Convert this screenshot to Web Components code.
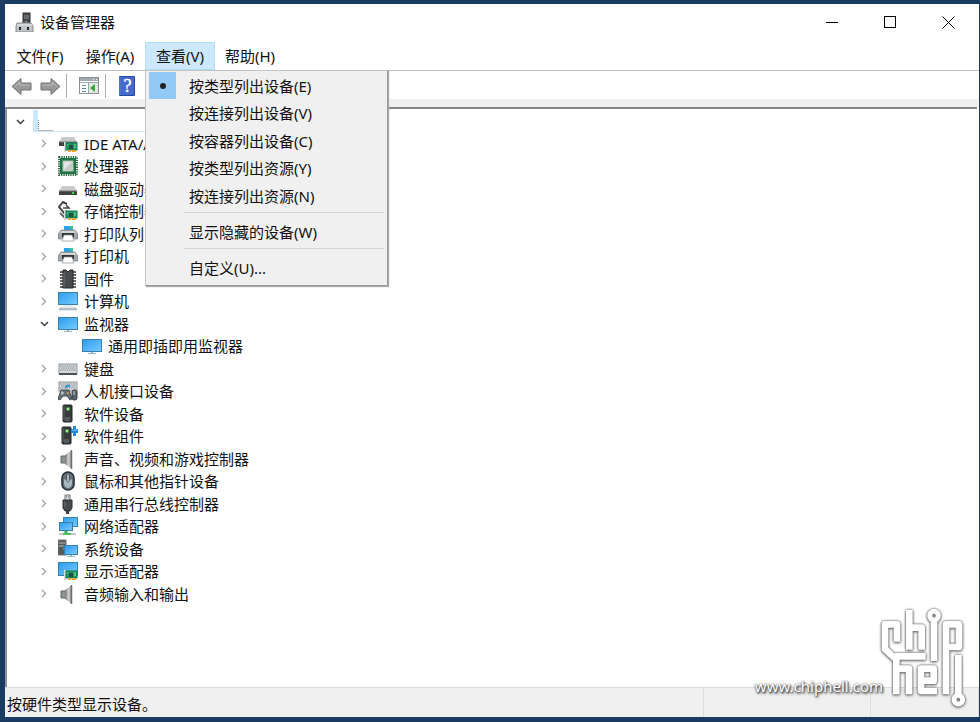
<!DOCTYPE html>
<html lang="zh-CN">
<head>
<meta charset="utf-8">
<title>设备管理器</title>
<style>
  body {
    margin: 0;
    background: #1a3c63;
    color: #111;
    font: 15px/22px "Noto Sans", "Noto Sans CJK SC", sans-serif;
  }
</style>
</head>
<body>
<dm-window caption="设备管理器">
  <dm-menu-bar slot="menu"></dm-menu-bar>
  <dm-toolbar slot="toolbar"></dm-toolbar>
  <dm-tree></dm-tree>
  <dm-status slot="status">按硬件类型显示设备。</dm-status>
</dm-window>
<chip-watermark></chip-watermark>

<script>
/**
 * Device manager window
 * Icons are 20x20 drawings, shared pieces (screen, card) are kept apart
 */

const DEFS = `
  <linearGradient id="scr" x1="0" y1="0" x2="1" y2="1">
    <stop offset="0" stop-color="#2f9cec"/><stop offset="1" stop-color="#74cbff"/>
  </linearGradient>
  <linearGradient id="met" x1="0" y1="0" x2="0" y2="1">
    <stop offset="0" stop-color="#d9d9d9"/><stop offset="1" stop-color="#8b8b8b"/>
  </linearGradient>
  <linearGradient id="horn" x1="0" y1="0" x2="1" y2="0">
    <stop offset="0" stop-color="#777"/><stop offset=".5" stop-color="#d0d0d0"/><stop offset="1" stop-color="#888"/>
  </linearGradient>`;

const screen = (x, y, w, h) => `
  <rect x="${x}" y="${y}" width="${w}" height="${h}" fill="#3c7eae"/>
  <rect x="${x + 1}" y="${y + 1}" width="${w - 2}" height="${h - 2}" fill="url(#scr)"/>`;

const card = (x, y) => `
  <path d="M${x} ${y}v10" stroke="#d6dde0" stroke-width="2"/>
  <rect x="${x + 1}" y="${y + 1}" width="11" height="7" fill="#1c9a63" stroke="#137a4d"/>
  <rect x="${x + 4}" y="${y + 3}" width="4" height="4" fill="#234f3f"/>
  <path d="M${x + 2} ${y + 3}h1M${x + 9} ${y + 3}h2M${x + 9} ${y + 5}h2" stroke="#8bdcb0"/>
  <path d="M${x + 3} ${y + 9}h3M${x + 7} ${y + 9}h4" stroke="#eba52f" stroke-width="2"/>`;

const drive = (y) => `
  <path d="M4 ${y}h12l3 5H1z" fill="#c9c9c9"/>
  <rect x="1" y="${y + 5}" width="18" height="4" fill="#3f4244"/>
  <path d="M1 ${y + 5}h18" stroke="#777"/>`;

const tower = (x) => `
  <rect x="${x}" y="1" width="9" height="17" rx="1" fill="#373b3c" stroke="#232728"/>
  <path d="M${x + 2} 14h5M${x + 2} 16h5" stroke="#737a7c"/>
  <path d="M${x + 1} 2v14" stroke="#5d6364"/>
  <circle cx="${x + 5}" cy="5" r="2" fill="#46ac42"/><circle cx="${x + 5}" cy="5" r="1" fill="#baffad"/>`;

const keys = (y, h) => `
  <rect x="1" y="${y}" width="18" height="${h}" fill="#d5d8da" stroke="#92979b"/>
  <path d="M2 ${y + 2}h16M3 ${y + 4}h14M2 ${y + 6}h16" stroke="#7e868b" stroke-dasharray="1.3 .9"/>`;

const speaker = `
  <path d="M3 7h5v7H3z" fill="#8d9294" stroke="#62676a"/>
  <path d="M7 6l7-5v19l-7-5z" fill="url(#horn)"/>
  <path d="M13.500 1v19" stroke="#6a6e70" stroke-width="1.500"/>`;

const printer = `
  <rect x="6" y="2" width="9" height="5" fill="#2aa2ea"/>
  <path d="M10 2h5v5z" fill="#34c793"/>
  <path d="M3 6h14l3 4v5H0v-5z" fill="#a3a6a8" stroke="#7b7f81" stroke-width=".6"/>
  <path d="M3 7h14l1 2H2z" fill="#d3d6d7"/>
  <rect x="4" y="9" width="12" height="4" fill="#2f3436"/>
  <path d="M6 11h8l2 6H4z" fill="#fff" stroke="#8b8f91" stroke-width=".7"/>`;

const ICONS = {
  app: `
    <rect x="9" y="1" width="7" height="11" fill="#44484b" stroke="#2f3233"/>
    <path d="M10 4h5M10 6h5" stroke="#888e92"/>
    <path d="M12 9v4" stroke="#bbb"/>
    <path d="M3 11h14l2 3v6H2v-6z" fill="#bfc4c7" stroke="#888d91"/>
    <path d="M3 13h15" stroke="#eee"/>
    <path d="M6 15v3M14 15v3" stroke="#24292b" stroke-width="2"/>`,
  ide: drive(3) + card(7, 8),
  cpu: `
    <rect x="1" y="1" width="18" height="18" fill="none" stroke="#316a45" stroke-width="2" stroke-dasharray="1.3 1"/>
    <rect x="2" y="2" width="16" height="16" fill="#1f7446"/>
    <rect x="5" y="5" width="10" height="10" fill="#e2e5e3" stroke="#a7c1af"/>
    <path d="M6 14l8-8v8z" fill="#c4cac6"/>`,
  disk: drive(7) + '<path d="M14 14h2" stroke="#45d14c" stroke-width="2"/>',
  storage: `
    <path d="M9 3L5 1 1 6l5 6 3-2" fill="none" stroke="#454545" stroke-width="2"/>
    <path d="M5 7h6L8 4" fill="none" stroke="#454545" stroke-width="1.500"/>
    <path d="M2 12l4 4h3" fill="none" stroke="#666" stroke-width="2"/>` + card(7, 9),
  printer,
  firmware: `
    <path d="M2 3h3M2 6h3M2 9h3M2 12h3M2 15h3M2 18h3M15 3h3M15 6h3M15 9h3M15 12h3M15 15h3M15 18h3" stroke="#34393b" stroke-width="1.600"/>
    <path d="M5 1h3l2 2 2-2h3v18H5z" fill="#484c4e" stroke="#252829"/>
    <path d="M6 4v14" stroke="#777"/>`,
  computer: screen(0, 1, 20, 13) + `
    <path d="M6 15h8" stroke="#bde7f9"/>
    <path d="M2 17h16l1 2H1z" fill="#c7cdd1" stroke="#8b969d" stroke-width=".5"/>`,
  monitor: screen(0, 3, 20, 13) + '<path d="M9 16h2v1h3v1H6v-1h3z" fill="#91b9cc"/>',
  keyboard: keys(5, 10) + '<path d="M1 15h18" stroke="#4d5254" stroke-width="2"/>',
  hid: keys(1, 9) + `
    <path d="M3 9h8l3 9-2 1-3-4H5l-3 4-2-1z" fill="#687176" stroke="#454d51"/>
    <path d="M3 12h3M4 10v4" stroke="#c9dce6"/>
    <circle cx="10" cy="12" r="1" fill="#e99d3d"/>
    <path d="M8 7q0-3 4-2" fill="none" stroke="#2793d8" stroke-width="2"/>
    <rect x="14" y="9" width="5" height="10" rx="2" fill="#59636a" stroke="#353e43"/>
    <path d="M16 10v4" stroke="#bdd8e7"/>`,
  device: tower(5),
  component: tower(4) + `
    <path d="M13 3h2V0h3v3h2v4h-2v3h-3V7h-2z" fill="#2588da"/>
    <path d="M14 4h5" stroke="#70bdf2"/>`,
  speaker,
  mouse: `
    <rect x="4" y="1" width="12" height="18" rx="6" fill="#65717a" stroke="#282f33" stroke-width="1.6"/>
    <path d="M6 8q4 3 8 0v5q-1 4-4 4t-4-4z" fill="#a7b7c2"/>
    <rect x="9" y="3" width="2" height="8" rx="1" fill="#edf4f7" stroke="#30393e" stroke-width=".7"/>`,
  usb: `
    <rect x="7" y="1" width="5" height="6" fill="#ddd" stroke="#777"/>
    <path d="M8 3h1M10 3h1" stroke="#555"/>
    <path d="M5 6h9v8l-2 3H7l-2-3z" fill="#474b4d" stroke="#2c2f30"/>
    <path d="M9.500 16v4" stroke="#3c4042" stroke-width="3"/>
    <path d="M7 8v5" stroke="#777"/>`,
  network: screen(5, 1, 15, 10) + screen(1, 6, 14, 9) + `
    <path d="M8 15v3" stroke="#35a64b" stroke-width="3"/>
    <path d="M1 18h17" stroke="#c4ccc9" stroke-width="2"/><path d="M5 18h8" stroke="#48c258" stroke-width="2"/>`,
  system: `
    <rect x="0" y="1" width="8" height="15" fill="#54595b" stroke="#777"/>
    <path d="M1 4h6M1 7h6" stroke="#b8bdbf"/><path d="M5 10h2" stroke="#58dc55"/>` +
    screen(6, 6, 14, 10) + '<path d="M12 16h2v1h3v1H9v-1h3z" fill="#8ebdd5"/>',
  display: screen(0, 1, 20, 14) + card(7, 9)
};

const TREE = [
  [1, 'ide', 'IDE ATA/ATAPI'],
  [1, 'cpu', '处理器'],
  [1, 'disk', '磁盘驱动器'],
  [1, 'storage', '存储控制器'],
  [1, 'printer', '打印队列'],
  [1, 'printer', '打印机'],
  [1, 'firmware', '固件'],
  [1, 'computer', '计算机'],
  [1, 'monitor', '监视器', 'open'],
  [2, 'monitor', '通用即插即用监视器', 'leaf'],
  [1, 'keyboard', '键盘'],
  [1, 'hid', '人机接口设备'],
  [1, 'device', '软件设备'],
  [1, 'component', '软件组件'],
  [1, 'speaker', '声音、视频和游戏控制器'],
  [1, 'mouse', '鼠标和其他指针设备'],
  [1, 'usb', '通用串行总线控制器'],
  [1, 'network', '网络适配器'],
  [1, 'system', '系统设备'],
  [1, 'display', '显示适配器'],
  [1, 'speaker', '音频输入和输出']
];

const VIEW_MENU = [
  '按类型列出设备(E)', '按连接列出设备(V)', '按容器列出设备(C)',
  '按类型列出资源(Y)', '按连接列出资源(N)', null,
  '显示隐藏的设备(W)', null,
  '自定义(U)...'
];

class DmIcon extends HTMLElement {
  connectedCallback() {
    this.attachShadow({ mode: 'open' }).innerHTML = `
      <style>
        :host { display: block; flex: none; width: 20px; height: 20px; }
        svg { display: block; width: 100%; height: 100%; }
      </style>
      <svg viewBox="0 0 20 20" aria-hidden="true"><defs>${DEFS}</defs>${ICONS[this.getAttribute('name')] || ''}</svg>`;
  }
}

class DmWindow extends HTMLElement {
  connectedCallback() {
    this.attachShadow({ mode: 'open' }).innerHTML = `
      <style>
        :host { display: flex; min-height: 100vh; box-sizing: border-box; padding: 4px 1px 5px 5px; }
        .frame { flex: 1; display: flex; flex-direction: column; min-width: 0; background: #fff; }
        header { display: flex; align-items: center; box-sizing: border-box; height: 38px; padding: 0 2px 2px 9px; gap: 6px; }
        h1 { flex: 1; margin: 0; font-size: 15px; font-weight: normal; }
        .controls { display: flex; align-self: stretch; }
        button { width: 58px; padding: 0; border: 0; background: none; }
        button svg { display: block; margin: auto; }
        main { flex: 1; display: flex; flex-direction: column; padding-right: 2px; }
      </style>
      <div class="frame">
        <header>
          <dm-icon name="app"></dm-icon>
          <h1>${this.getAttribute('caption')}</h1>
          <div class="controls">
            <button aria-label="最小化"><svg width="13" height="13" stroke="#000"><path d="M0 6.500h12"/></svg></button>
            <button aria-label="最大化"><svg width="13" height="13" stroke="#000" fill="none"><rect x=".5" y=".5" width="11" height="11"/></svg></button>
            <button aria-label="关闭"><svg width="13" height="13" stroke="#000"><path d="M.5 .5l12 12M12.500 .5l-12 12"/></svg></button>
          </div>
        </header>
        <slot name="menu"></slot>
        <slot name="toolbar"></slot>
        <main><slot></slot></main>
        <slot name="status"></slot>
      </div>`;
  }
}

class DmMenuBar extends HTMLElement {
  connectedCallback() {
    this.attachShadow({ mode: 'open' }).innerHTML = `
      <style>
        :host { display: flex; height: 28px; border-bottom: 1px solid #bcbcbc; }
        .item { position: relative; display: flex; min-width: 70px; }
        button { flex: 1; padding: 0 4px; border: 0; background: none; color: inherit; font: inherit; }
        .item.open { background: #cce8ff; box-shadow: inset 0 0 0 1px #b5dcf7; }
      </style>
      ${['文件(F)', '操作(A)', '查看(V)', '帮助(H)'].map(label => {
        const open = label === '查看(V)';
        return `
          <div class="item ${open ? 'open' : ''}">
            <button aria-haspopup="menu" aria-expanded="${open}">${label}</button>
            ${open ? '<dm-popup></dm-popup>' : ''}
          </div>`;
      }).join('')}`;
  }
}

class DmPopup extends HTMLElement {
  connectedCallback() {
    let first = true;
    this.attachShadow({ mode: 'open' }).innerHTML = `
      <style>
        :host {
          position: absolute; z-index: 2; top: 100%; left: 0;
          box-sizing: border-box; width: 243px; padding: 1px 3px 4px;
          border: 1px solid #c4c4c4; border-right-color: #999; border-bottom-color: #999;
          background: #f0f0f0; box-shadow: 1px 1px 1px #aaa;
        }
        button {
          display: flex; align-items: center; width: 100%; height: 28px; padding: 0;
          border: 0; background: none; color: inherit; font: inherit; text-align: left;
        }
        button:nth-child(even) { height: 27px; }
        .mark { display: flex; width: 27px; height: 100%; margin-right: 13px; align-items: center; justify-content: center; }
        .mark.on { background: #91c9f7; }
        .mark.on::after { content: ""; width: 6px; height: 6px; border-radius: 50%; background: #222; }
        hr { height: 1px; margin: 3px 0 5px 35px; border: 0; background: #d5d5d5; }
      </style>
      ${VIEW_MENU.map(label => {
        if (!label) return '<hr>';
        const on = first ? 'on' : '';
        first = false;
        return `<button><span class="mark ${on}"></span>${label}</button>`;
      }).join('')}`;
  }
}

class DmToolbar extends HTMLElement {
  connectedCallback() {
    const arrow = 'M1 9.500L10 1.500V6H20V13H10V17.500Z';
    this.attachShadow({ mode: 'open' }).innerHTML = `
      <style>
        :host { display: block; border-bottom: 8px solid #f0f0f0; }
        .bar { display: flex; align-items: center; height: 26px; padding: 2px 2px 0; }
        button { display: block; padding: 0 4px; border: 0; background: none; }
        svg { display: block; }
        .sep { width: 1px; height: 24px; margin: 0 4px 0 1px; background: #adadad; }
        .sep + button { margin-left: 4px; }
      </style>
      <div class="bar">
        <button aria-label="后退"><svg width="21" height="19"><path d="${arrow}" fill="#999" stroke="#707070"/><path d="M4 9.500L9 5V8H19" fill="none" stroke="#bdbdbd"/></svg></button>
        <button aria-label="前进"><svg width="21" height="19"><g transform="matrix(-1 0 0 1 21 0)"><path d="${arrow}" fill="#999" stroke="#707070"/><path d="M4 9.500L9 5V8H19" fill="none" stroke="#bdbdbd"/></g></svg></button>
        <span class="sep"></span>
        <button aria-label="显示/隐藏控制台树"><svg width="21" height="18">
          <rect x=".5" y=".5" width="19" height="16" fill="#fff" stroke="#8b8f95"/>
          <path d="M1 2.500h18" stroke="#a4a9b0" stroke-width="3"/>
          <path d="M14 2.500h1M17 2.500h1" stroke="#fff"/>
          <path d="M1 5.500h18M9.500 5v11" stroke="#9da5ae"/>
          <path d="M3 8.500h4M3 11.500h4M3 14.500h4" stroke="#5c88bc"/>
          <path d="M10 6h9v10h-9z" fill="#e2eadf"/>
          <path d="M16 7v8l-5-4z" fill="#35a632"/>
        </svg></button>
        <span class="sep"></span>
        <button aria-label="帮助"><svg width="20" height="20">
          <rect x="1" y="0" width="16" height="20" rx="1" fill="#244aa5"/>
          <rect x="3" y="1" width="13" height="18" fill="#4769cc"/>
          <path d="M2 1v18" stroke="#7d99dd"/>
          <text x="9.500" y="16" text-anchor="middle" font-family="Liberation Serif, serif" font-size="18" fill="#fff" stroke="#fff" stroke-width=".4">?</text>
        </svg></button>
      </div>`;
  }
}

class DmTree extends HTMLElement {
  connectedCallback() {
    const chevron = state => {
      if (state === 'leaf') return '<span class="toggle"></span>';
      return state === 'open'
        ? '<button class="toggle" aria-label="折叠"><svg width="9" height="9"><path d="M1 3l3.500 3.500L8 3" fill="none" stroke="#3d3d3d" stroke-width="1.500"/></svg></button>'
        : '<button class="toggle" aria-label="展开"><svg width="9" height="9"><path d="M2 1l3.500 3.500L2 8" fill="none" stroke="#a0a0a0" stroke-width="1.300"/></svg></button>';
    };
    this.attachShadow({ mode: 'open' }).innerHTML = `
      <style>
        :host { flex: 1; display: block; border-top: 2px solid #858585; border-left: 2px solid #8f9499; }
        ul { margin: 0; padding: 1px 0 0 5px; list-style: none; }
        li { display: flex; align-items: center; gap: 6px; height: 22px; white-space: nowrap; }
        li:nth-child(even) { height: 23px; }
        .level1 { padding-left: 24px; }
        .level2 { padding-left: 48px; }
        .toggle { display: flex; align-items: center; justify-content: center; flex: none; width: 16px; height: 16px; padding: 0; border: 0; background: none; }
        .root { gap: 5px; }
        .blank { display: flex; align-items: flex-end; box-sizing: border-box; width: 200px; height: 22px; border: solid #cce8ff; border-width: 0 0 1px 5px; }
        .blank span { width: 14px; height: 10px; border-left: 1px dotted #888; border-bottom: 1px solid #b5b5b5; }
      </style>
      <ul role="tree">
        <li class="root" role="treeitem" aria-selected="true">${chevron('open')}<div class="blank"><span></span></div></li>
        ${TREE.map(([level, icon, label, state]) => `
          <li class="level${level}" role="treeitem" aria-level="${level + 1}">${chevron(state)}<dm-icon name="${icon}"></dm-icon><span>${label}</span></li>`).join('')}
      </ul>`;
  }
}

class DmStatus extends HTMLElement {
  connectedCallback() {
    this.attachShadow({ mode: 'open' }).innerHTML = `
      <style>
        :host { display: flex; align-items: stretch; height: 29px; border-top: 1px solid #dcdcdc; background: #f0f0f0; }
        div { border-right: 1px solid #dedede; }
        .text { flex: 1; padding: 5px 2px 0; }
        .mid { width: 166px; }
        .end { width: 107px; }
      </style>
      <div class="text"><slot></slot></div><div class="mid"></div><div class="end"></div>`;
  }
}

// Site mark laid over the bottom right corner, the logo is drawn as circuit traces
class ChipWatermark extends HTMLElement {
  connectedCallback() {
    this.attachShadow({ mode: 'open' }).innerHTML = `
      <style>
        :host { position: absolute; right: 11px; bottom: 11px; display: flex; align-items: flex-end; color: #fff; pointer-events: none; }
        span { padding-bottom: 14px; font-size: 15px; line-height: 22px; text-shadow: 0 0 2px #444, 1px 1px 2px #444, 1px 2px 3px #777; }
        svg { display: block; width: 90px; height: 104px; margin-left: -4px; overflow: visible; filter: drop-shadow(0 0 1px #555) drop-shadow(0 1px 1px #888); }
      </style>
      <span>www.chiphell.com</span>
      <svg viewBox="420 20 270 312" fill="none" stroke="#fff" stroke-width="20" stroke-linejoin="round" aria-hidden="true">
        <path d="M474 124V72H438V146L472 178V282M466 168H560M472 205H510V282"/>
        <path d="M511 28V148M511 82H548V148"/>
        <path d="M585 58V182"/>
        <path d="M621 282V72H660V140H621"/>
        <path d="M594 272H546V205H584V241H546"/>
        <path d="M658 164V286"/>
        <circle cx="585" cy="46" r="13" stroke-width="15"/>
        <circle cx="658" cy="298" r="13" stroke-width="15"/>
      </svg>`;
  }
}

customElements.define('dm-icon', DmIcon);
customElements.define('dm-window', DmWindow);
customElements.define('dm-menu-bar', DmMenuBar);
customElements.define('dm-popup', DmPopup);
customElements.define('dm-toolbar', DmToolbar);
customElements.define('dm-tree', DmTree);
customElements.define('dm-status', DmStatus);
customElements.define('chip-watermark', ChipWatermark);
</script>
</body>
</html>
